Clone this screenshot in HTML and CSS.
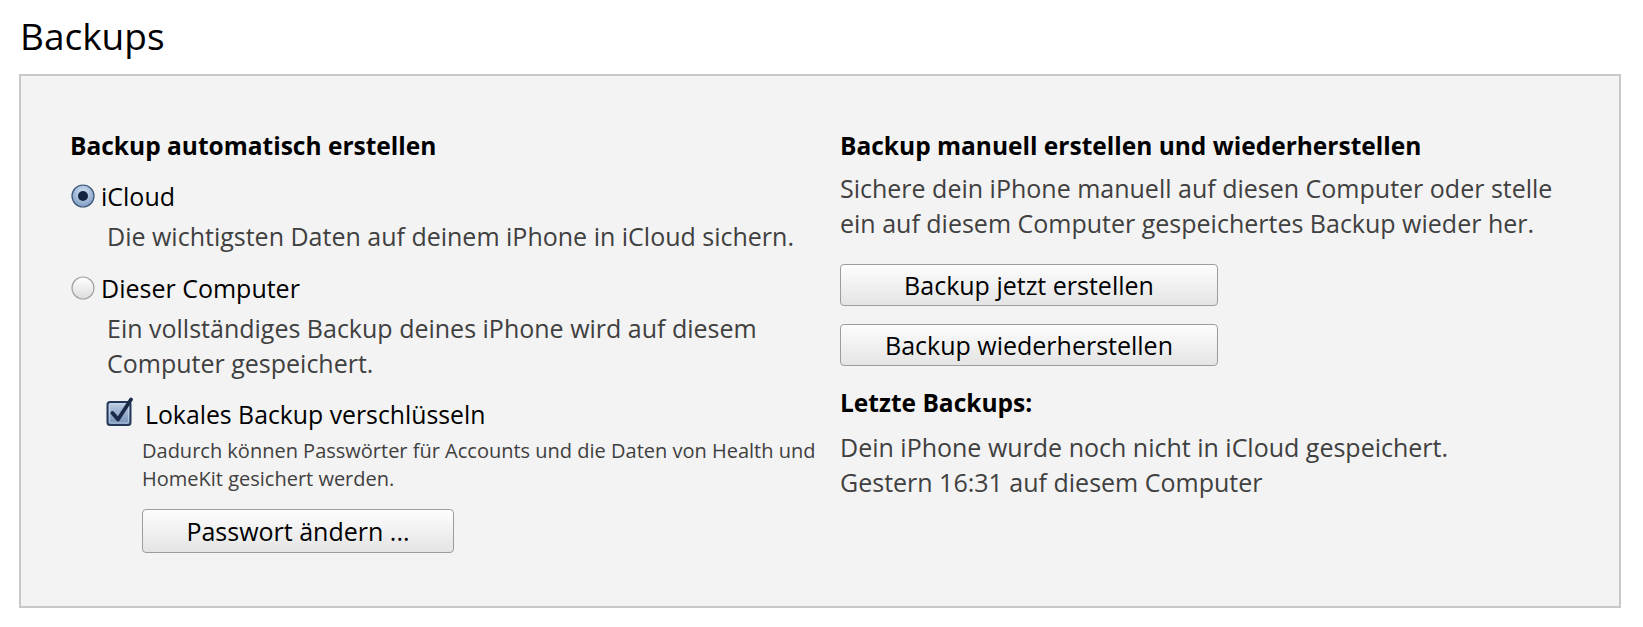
FILE: index.html
```html
<!DOCTYPE html>
<html lang="de">
<head>
    <meta charset="UTF-8">
    <meta name="viewport" content="width=device-width, initial-scale=1.0">
    <title>Backups</title>
    <link rel="stylesheet" href="styles.css">
</head>
<body>

<h1 class="page-title">Backups</h1>

<div class="panel">
    <div class="column">
        <h2>Backup automatisch erstellen</h2>

        <div class="option">
            <svg class="radio" width="24" height="24" viewBox="0 0 24 24">
                <defs>
                    <radialGradient id="radioOn" cx="50%" cy="35%" r="65%">
                        <stop offset="0" stop-color="#d4e2f4"/>
                        <stop offset="1" stop-color="#7f9cc4"/>
                    </radialGradient>
                </defs>
                <circle cx="12" cy="12" r="11" fill="url(#radioOn)" stroke="#3c5578" stroke-width="1.2"/>
                <circle cx="12" cy="12" r="5" fill="#14233f"/>
            </svg>
            <span class="option-label">iCloud</span>
        </div>
        <p class="desc">Die wichtigsten Daten auf deinem iPhone in iCloud sichern.</p>

        <div class="option">
            <svg class="radio" width="24" height="24" viewBox="0 0 24 24">
                <defs>
                    <linearGradient id="radioOff" x1="0" y1="0" x2="0" y2="1">
                        <stop offset="0" stop-color="#ffffff"/>
                        <stop offset="1" stop-color="#dcdcdc"/>
                    </linearGradient>
                </defs>
                <circle cx="12" cy="12" r="11" fill="url(#radioOff)" stroke="#a3a3a3" stroke-width="1.2"/>
            </svg>
            <span class="option-label">Dieser Computer</span>
        </div>
        <p class="desc">Ein vollständiges Backup deines iPhone wird auf diesem<br>Computer gespeichert.</p>

        <div class="sub">
            <div class="check-row">
                <svg class="checkbox" width="30" height="30" viewBox="0 0 30 30">
                    <defs>
                        <linearGradient id="boxFill" x1="0" y1="0" x2="0" y2="1">
                            <stop offset="0" stop-color="#bccde3"/>
                            <stop offset="1" stop-color="#7490b6"/>
                        </linearGradient>
                    </defs>
                    <rect x="1.5" y="5" width="23" height="23" rx="2.5" fill="url(#boxFill)" stroke="#26385a" stroke-width="2"/>
                    <rect x="3.5" y="7" width="19" height="19" rx="1.5" fill="none" stroke="#d6e0ee" stroke-opacity="0.6" stroke-width="1"/>
                    <path d="M6.5 16 L12 22.5 L25 2.5" fill="none" stroke="#1a2a48" stroke-width="3.8" stroke-linecap="round" stroke-linejoin="round"/>
                </svg>
                <span class="check-label">Lokales Backup verschlüsseln</span>
            </div>
            <p class="small">Dadurch können Passwörter für Accounts und die Daten von Health und<br>HomeKit gesichert werden.</p>
            <button class="btn btn-pass">Passwort ändern ...</button>
        </div>
    </div>

    <div class="column">
        <h2>Backup manuell erstellen und wiederherstellen</h2>
        <p class="text">Sichere dein iPhone manuell auf diesen Computer oder stelle<br>ein auf diesem Computer gespeichertes Backup wieder her.</p>
        <div class="buttons">
            <button class="btn btn-wide">Backup jetzt erstellen</button>
            <button class="btn btn-wide">Backup wiederherstellen</button>
        </div>
        <h3>Letzte Backups:</h3>
        <p class="text text-last">Dein iPhone wurde noch nicht in iCloud gespeichert.<br>Gestern 16:31 auf diesem Computer</p>
    </div>
</div>

</body>
</html>
```

FILE: styles.css
```css
body {
    margin: 0;
    background: #ffffff;
    font-family: "Open Sans", "Noto Sans", sans-serif;
    color: #000;
}
.page-title {
    font-weight: 400;
    font-size: 37px;
    line-height: 48px;
    margin: 12px 0 14px 20px;
}
.panel {
    margin: 0 22px 0 19px;
    height: 534px;
    box-sizing: border-box;
    background: #f3f3f3;
    border: 2px solid #c8c8c8;
    padding: 54px 0 0 49px;
    display: grid;
    grid-template-columns: 770px 1fr;
}
h2, h3 {
    margin: 0;
    font-size: 24.5px;
    font-weight: 700;
    line-height: 32px;
}
.option {
    display: flex;
    align-items: center;
    margin-top: 17px;
    height: 34px;
}
.radio {
    margin-left: 1px;
    margin-right: 6px;
}
.option-label {
    font-size: 25px;
}
.desc {
    margin: 6px 0 0 37px;
    font-size: 25px;
    line-height: 35px;
    color: #404040;
}
.sub {
    margin-left: 37px;
}
.check-row {
    display: flex;
    align-items: center;
    margin-top: 17px;
    height: 32px;
}
.checkbox {
    margin-left: -1px;
    margin-right: 9px;
    margin-top: -5px;
}
.check-label {
    font-size: 24.8px;
}
.small {
    margin: 7px 0 0 35px;
    font-size: 20px;
    line-height: 28px;
    color: #404040;
}
.btn {
    font-family: inherit;
    font-size: 25px;
    color: #000;
    background: linear-gradient(#fdfdfd, #e4e4e4);
    border: 1px solid #9c9c9c;
    border-radius: 4px;
    box-shadow: inset 0 1px 0 #ffffff;
    padding: 0;
}
.btn-pass {
    display: block;
    margin: 16px 0 0 35px;
    width: 312px;
    height: 44px;
}
.text {
    margin: 9px 0 0 0;
    font-size: 25px;
    line-height: 34.5px;
    color: #404040;
}
.buttons {
    display: flex;
    flex-direction: column;
    gap: 18px;
    margin-top: 24px;
}
.btn-wide {
    width: 378px;
    height: 42px;
}
h3 {
    margin-top: 21px;
}
.text-last {
    margin-top: 11px;
}
```
